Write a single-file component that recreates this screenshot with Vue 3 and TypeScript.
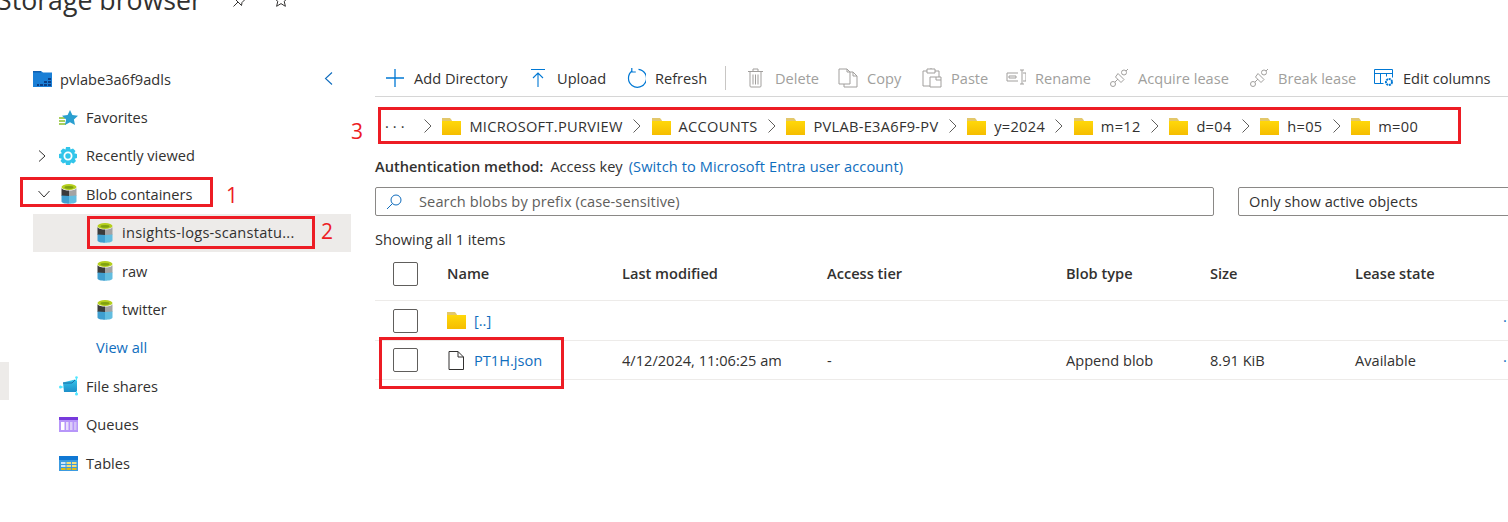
<script setup lang="ts">
interface Tool { label: string; icon: string; off?: boolean }
const tools: Tool[] = [
  { label: 'Add Directory', icon: 'i-plus' },
  { label: 'Upload', icon: 'i-upload' },
  { label: 'Refresh', icon: 'i-refresh' },
  { label: 'Delete', icon: 'i-delete', off: true },
  { label: 'Copy', icon: 'i-copy', off: true },
  { label: 'Paste', icon: 'i-paste', off: true },
  { label: 'Rename', icon: 'i-rename', off: true },
  { label: 'Acquire lease', icon: 'i-lease', off: true },
  { label: 'Break lease', icon: 'i-lease', off: true },
  { label: 'Edit columns', icon: 'i-columns' },
]
const crumbs = ['MICROSOFT.PURVIEW', 'ACCOUNTS', 'PVLAB-E3A6F9-PV', 'y=2024', 'm=12', 'd=04', 'h=05', 'm=00']
</script>

<template>
  <div class="page">
    <svg class="sprite" width="0" height="0" aria-hidden="true">
      <defs>
        <linearGradient id="fg" x1="0" y1="0" x2="0" y2="1"><stop offset="0" stop-color="#ffd80a" /><stop offset="1" stop-color="#f5bd00" /></linearGradient>
        <linearGradient id="sky" x1="0" y1="0" x2="0" y2="1"><stop offset="0" stop-color="#35c4ea" /><stop offset="1" stop-color="#1d8fc9" /></linearGradient>
        <symbol id="folder" viewBox="0 0 19 17">
          <path d="M0 0h8l2 2.500v2H0z" fill="#e3c76a" />
          <path d="M0 3h19v14H0z" fill="url(#fg)" />
        </symbol>
        <symbol id="blob" viewBox="0 0 16 20">
          <ellipse cx="8" cy="3" rx="7.500" ry="3" fill="#b5cf1e" />
          <ellipse cx="8" cy="3.400" rx="4.500" ry="1.400" fill="#7fa012" />
          <path d="M.5 4c1 2 5 2.500 7.500 2.500V12H.5z" fill="#3b3b3b" />
          <path d="M8 6.500c3 0 6.500-.5 7.500-2.500v8H8z" fill="#a3a3a3" />
          <path d="M.5 11.500 8 12v7.800c-4 0-7.500-1-7.500-2.300z" fill="#3f9fd0" />
          <path d="M8 12l7.500-.5v6c0 1.300-3.500 2.300-7.500 2.300z" fill="#62bde0" />
        </symbol>
        <symbol id="i-plus" viewBox="0 0 20 20"><path d="M10 1v18M1 10h18" stroke="#0078d4" stroke-width="1.300" fill="none" /></symbol>
        <symbol id="i-upload" viewBox="0 0 20 20"><path d="M3 1.500h14M10 19V5M5 10l5-5 5 5" stroke="#0078d4" stroke-width="1.100" fill="none" /></symbol>
        <symbol id="i-refresh" viewBox="0 0 20 20"><path d="M6 3.100A9 9 0 1 0 12.500 1.300" stroke="#0078d4" stroke-width="1.200" fill="none" /><path d="M5.800 0v4h4" stroke="#0078d4" stroke-width="1.200" fill="none" /></symbol>
        <symbol id="i-delete" viewBox="0 0 20 20"><path d="M2 3.500h15M7 3.500V1h5v2.500M4 3.500V18a1 1 0 0 0 1 1h9a1 1 0 0 0 1-1V3.500M7 6.500v10M9.500 6.500v10M12 6.500v10" stroke="#a19f9d" fill="none" /></symbol>
        <symbol id="i-copy" viewBox="0 0 20 20"><path d="M1 1h8l3 3v12H1zM12 4h3l4 4v11H6v-3M9 1v3h3M15 4v4h4" stroke="#a19f9d" fill="none" /></symbol>
        <symbol id="i-paste" viewBox="0 0 20 20"><path d="M5 3H1v15h7M13 3h4v6M5 1h8v4H5zM9 1V0M8 9h11v10H8zM14 9v3h5" stroke="#a19f9d" fill="none" /></symbol>
        <symbol id="i-rename" viewBox="0 0 20 20"><path d="M12 5H1v8h11M3 8h7v2H3z" stroke="#a19f9d" fill="none" /><path d="M14 2h4M14 16h4M16 2v14M17 5h3v8h-3" stroke="#a19f9d" fill="none" /></symbol>
        <symbol id="i-lease" viewBox="0 0 20 20"><circle cx="4" cy="16" r="2.500" stroke="#a19f9d" fill="none" /><circle cx="15" cy="4.500" r="2.500" stroke="#a19f9d" fill="none" /><path d="M6 14l3-3M9 5.500l6 6-3 3-5.500-5.500zM17 3l2-2" stroke="#a19f9d" fill="none" /></symbol>
        <symbol id="i-columns" viewBox="0 0 20 20"><path d="M.5 1.500h18v8M.5 1.500V15.500h9M.5 5.500h18M6.500 5.500v10M12.500 5.500v3" stroke="#0078d4" fill="none" /><circle cx="15" cy="14" r="3" stroke="#0078d4" stroke-width="2" stroke-dasharray="2 .7" fill="none" /></symbol>
      </defs>
    </svg>

    <header class="title">
      <h1>Storage browser</h1>
      <svg class="pin" viewBox="0 0 14 14" width="14" height="14"><path d="M8 0l6 6-2 .5-3 3-.5 3L2.500 6.500l3-.5 3-3zM5 9l-4.500 4.500" stroke="#323130" fill="none" /></svg>
      <svg class="star" viewBox="0 0 14 14" width="14" height="14"><path d="M7 0l2 4.700 5 .4-3.800 3.200 1.200 5L7 10.600 2.600 13.300l1.200-5L0 5.100l5-.4z" stroke="#323130" fill="none" /></svg>
    </header>

    <div class="body">
      <aside class="side">
        <div class="row acct">
          <svg class="acct-ic" viewBox="0 0 19 16" width="19" height="16">
            <path d="M0 0h8l2 1.500h9V16H0z" fill="#1a7fd6" /><path d="M0 1.500h8V0H0z" fill="#0f5fb0" />
            <path d="M4 13h2v2H4zM7 13h3v2H7zM11 13h3v2h-3zM15 13h3v2h-3zM11 10h3v2h-3zM15 10h3v2h-3zM15 7h3v2h-3z" fill="#0b3f86" />
          </svg>
          <span>pvlabe3a6f9adls</span>
          <svg class="collapse" viewBox="0 0 9 13" width="9" height="13"><path d="M8 .5 1.500 6.500 8 12.500" stroke="#0f6cbd" stroke-width="1.100" fill="none" /></svg>
        </div>
        <div class="row top">
          <svg class="ic" viewBox="0 0 19 15" width="19" height="15">
            <path d="M0 7h6v2H0zM0 10h6v2H0zM0 13h7v2H0z" fill="#a8cf5e" />
            <path d="M11 0l2.400 5 5.600.7-4.100 3.800 1.100 5.500-5-2.800-5 2.800 1.100-5.500L3 5.700 8.600 5z" fill="#2a9fd0" />
          </svg>
          <span>Favorites</span>
        </div>
        <div class="row top">
          <svg class="chev" viewBox="0 0 8 12" width="8" height="12"><path d="M1 .5 7 6 1 11.500" stroke="#323130" fill="none" /></svg>
          <svg class="ic" viewBox="0 0 18 18" width="18" height="18">
            <path d="M7 0h4l.5 2.500 2.500-1 2.500 2.500-1.300 2.200L18 7v4l-2.300.8 1.300 2.200-2.500 2.500-2.500-1L11 18H7l-.5-2.500-2.500 1L1.500 14l1.300-2.200L0 11V7l2.800-.8L1.500 4 4 1.500l2.500 1z" fill="#32c5ea" />
            <circle cx="9" cy="9" r="3.600" fill="none" stroke="#fff" stroke-width="1.800" />
          </svg>
          <span>Recently viewed</span>
        </div>
        <div class="row top">
          <svg class="chev" viewBox="0 0 12 8" width="12" height="8"><path d="M.5 1 6 7l5.500-6" stroke="#323130" fill="none" /></svg>
          <svg class="blob-top"><use href="#blob" /></svg>
          <span>Blob containers</span>
        </div>
        <div class="row child sel"><svg class="blob"><use href="#blob" /></svg><span>insights-logs-scanstatu...</span></div>
        <div class="row child"><svg class="blob"><use href="#blob" /></svg><span>raw</span></div>
        <div class="row child"><svg class="blob"><use href="#blob" /></svg><span>twitter</span></div>
        <div class="row view"><a>View all</a></div>
        <div class="row top">
          <svg class="ic" viewBox="0 0 20 20" width="20" height="20">
            <path d="M4 6.500l12-3 2 1V16H5z" fill="url(#sky)" />
            <path d="M4 7h9l3-3" stroke="#1b6fa8" fill="none" />
            <circle cx="1.500" cy="11" r="1.500" fill="#50e6ff" /><circle cx="17.500" cy="1.500" r="1.300" fill="#50e6ff" /><circle cx="17.500" cy="18" r="1.500" fill="#50e6ff" />
            <path d="M2 11h3M17.500 2v3M17.500 15v3" stroke="#50e6ff" />
          </svg>
          <span>File shares</span>
        </div>
        <div class="row top">
          <svg class="ic" viewBox="0 0 19 15" width="19" height="15">
            <path d="M0 0h19v15H0z" fill="#b796f9" /><path d="M0 0h19v3H0z" fill="#773adc" />
            <path d="M2 5h3.500v8H2z" fill="#fff" /><path d="M7 5h2.500v8H7z" fill="#e8defc" /><path d="M11 5h2.500v8H11z" fill="#dccdf9" /><path d="M15 5h2.500v8H15z" fill="#d3c1f7" />
          </svg>
          <span>Queues</span>
        </div>
        <div class="row top">
          <svg class="ic" viewBox="0 0 19 15" width="19" height="15">
            <path d="M0 0h19v15H0z" fill="#3c9be0" /><path d="M0 0h19v4H0z" fill="#0f78d4" />
            <path d="M2 6h4.500v2H2zM2 9h4.500v2H2z" fill="#cfe6f8" /><path d="M7.500 6H12v2H7.500zM13 6h4.500v2H13zM7.500 9H12v2H7.500zM13 9h4.500v2H13z" fill="#f4e07a" /><path d="M2 12h4.500v2H2zM7.500 12H12v2H7.500zM13 12h4.500v2H13z" fill="#e0bc12" />
          </svg>
          <span>Tables</span>
        </div>
      </aside>

      <main class="main">
        <div class="toolbar">
          <template v-for="(t, i) in tools" :key="t.label">
            <div class="tool" :class="{ off: t.off }">
              <svg class="tool-ic"><use :href="'#' + t.icon" /></svg>
              <span>{{ t.label }}</span>
            </div>
            <i v-if="i === 2" class="sep"></i>
          </template>
        </div>

        <nav class="crumbs">
          <span class="dots">···</span>
          <template v-for="c in crumbs" :key="c">
            <svg class="crumb-chev" viewBox="0 0 8 14" width="8" height="14"><path d="M.5 .5 7 7 .5 13.500" stroke="#605e5c" fill="none" /></svg>
            <svg class="folder"><use href="#folder" /></svg>
            <span class="crumb">{{ c }}</span>
          </template>
        </nav>

        <p class="auth"><b>Authentication method:</b><span class="key">Access key</span><a>(Switch to Microsoft Entra user account)</a></p>

        <div class="filters">
          <div class="search">
            <svg viewBox="0 0 16 16" width="16" height="16"><circle cx="10" cy="6" r="5" stroke="#0f6cbd" fill="none" /><path d="M6.500 9.500 1 15" stroke="#0f6cbd" fill="none" /></svg>
            <span>Search blobs by prefix (case-sensitive)</span>
          </div>
          <div class="select">Only show active objects</div>
        </div>

        <p class="count">Showing all 1 items</p>

        <div class="grid head">
          <span class="check"></span><span class="hd">Name</span><span class="hd">Last modified</span><span class="hd">Access tier</span><span class="hd">Blob type</span><span class="hd">Size</span><span class="hd">Lease state</span><span></span>
        </div>
        <div class="grid line up">
          <span class="check"></span>
          <span class="name"><svg class="folder"><use href="#folder" /></svg><a>[..]</a></span>
          <span></span><span></span><span></span><span></span><span></span><span class="more">···</span>
        </div>
        <div class="grid line file">
          <span class="check"></span>
          <span class="name"><svg class="doc" viewBox="0 0 16 19" width="16" height="19"><path d="M1 .5h9l5.500 5.500v12.500H1zM10 .5V6h5.500" stroke="#323130" fill="none" /></svg><a>PT1H.json</a></span>
          <span>4/12/2024, 11:06:25 am</span><span>-</span><span>Append blob</span><span>8.91 KiB</span><span>Available</span><span class="more">···</span>
        </div>
      </main>
    </div>

    <i class="edge"></i>
    <i class="mark m1"></i><i class="mark m2"></i><i class="mark m3"></i><i class="mark m4"></i>
    <span class="num n1">1</span><span class="num n2">2</span><span class="num n3">3</span>
  </div>
</template>

<style>
html, body { margin: 0; background: #fff; }
</style>

<style scoped>
.page {
  position: relative;
  width: 1508px;
  height: 522px;
  overflow: hidden;
  background: #fff;
  color: #323130;
  font: 14.6px/20px "Open Sans", "Noto Sans", sans-serif;
}
.sprite { position: absolute; }
a { color: #106ebe; }
p { margin: 0; }

.title { display: flex; align-items: center; height: 40px; margin-top: -20px; margin-bottom: 40px; margin-left: -3px; }
h1 { margin: 0; font-size: 26.7px; font-weight: 400; line-height: 32px; width: 236px; flex: none; }
.pin { margin-right: 27px; }

.body { display: flex; }
.side { width: 351px; flex: none; }
.row { display: flex; align-items: center; height: 38.4px; position: relative; }
.row span, .row a { padding-bottom: 1px; }
.acct { margin-left: 33px; }
.acct-ic { margin-right: 8px; }
.collapse { position: absolute; left: 291px; top: 12px; }
.top { padding-left: 59px; }
.ic { position: absolute; left: 59px; }
.top span { margin-left: 27px; }
.chev { position: absolute; left: 38px; }
.blob-top { width: 16px; height: 20px; position: absolute; left: 61px; }
.child { margin-left: 33px; padding-left: 64px; }
.blob { width: 16px; height: 20px; }
.child span { margin-left: 9px; }
.sel { background: #edebe9; }
.sel span { letter-spacing: 0.25px; }
.view { padding-left: 96px; }

.main { flex: 1; min-width: 0; margin-left: 24px; }
.toolbar {
  display: grid;
  grid-template-columns: 143px 98px 99px 21px 92px 84px 84px 103px 140px 125px auto;
  align-items: center;
  height: 36px;
  padding-left: 10px;
  border-bottom: 1px solid #d6d6d6;
}
.tool { display: flex; align-items: center; white-space: nowrap; }
.tool-ic { width: 20px; height: 20px; margin-right: 9px; flex: none; }
.off { color: #a19f9d; }
.sep { width: 1px; height: 24px; background: #c8c6c4; }

.crumbs { display: flex; align-items: center; height: 36px; margin-top: 11px; padding-left: 10px; }
.dots { width: 39px; letter-spacing: 4px; }
.crumb-chev { margin-right: 10.4px; flex: none; }
.folder { width: 19px; height: 17px; flex: none; }
.crumb { margin-left: 8px; margin-right: 10.4px; white-space: nowrap; letter-spacing: 0.3px; }

.auth { margin-top: 12px; display: flex; white-space: nowrap; }
.auth b { font-weight: 600; }
.auth a { letter-spacing: 0.1px; }
.key { margin-left: 7px; margin-right: 6px; }

.filters { display: flex; gap: 24px; margin-top: 11px; }
.search, .select {
  height: 29px;
  box-sizing: border-box;
  border: 1px solid #8a8886;
  border-radius: 2px;
  display: flex;
  align-items: center;
  white-space: nowrap;
}
.search { width: 839px; flex: none; padding-left: 10px; color: #605e5c; }
.search span { margin-left: 17px; padding-bottom: 2px; letter-spacing: 0.1px; }
.select { width: 300px; flex: none; padding-left: 10px; padding-bottom: 2px; letter-spacing: 0.08px; }

.count { margin-top: 13px; }

.grid { display: grid; grid-template-columns: 72px 175px 205px 239px 144px 145px 148px 20px; align-items: center; white-space: nowrap; }
.head { box-sizing: border-box; height: 47px; padding-bottom: 6px; margin-top: 5px; font-weight: 600; border-bottom: 1px solid #edebe9; }
.hd { padding-bottom: 2px; }
.line { height: 39px; border-bottom: 1px solid #edebe9; }
.file { height: 38px; }
.check { display: block; box-sizing: border-box; width: 25px; height: 24px; margin-left: 18px; border: 1px solid #605e5c; border-radius: 2px; }
.name { display: flex; align-items: center; }
.name a { margin-left: 8px; }
.up a, .up .more { padding-bottom: 2px; }
.doc { margin: 0 2px 0 1px; }
.more { color: #0f6cbd; letter-spacing: 4px; }

.edge { position: absolute; left: 0; top: 362px; width: 9px; height: 38px; background: #edebe9; }
.mark { position: absolute; box-sizing: border-box; border: 3px solid #ed1c24; }
.m1 { left: 20px; top: 177px; width: 193px; height: 30px; }
.m2 { left: 87px; top: 216px; width: 228px; height: 33px; }
.m3 { left: 378px; top: 107px; width: 1083px; height: 37px; }
.m4 { left: 379px; top: 337px; width: 185px; height: 52px; }
.num { position: absolute; color: #ed1c24; font-size: 21px; line-height: 24px; }
.n1 { left: 226px; top: 183px; }
.n2 { left: 321px; top: 219px; }
.n3 { left: 351px; top: 119px; }
</style>
